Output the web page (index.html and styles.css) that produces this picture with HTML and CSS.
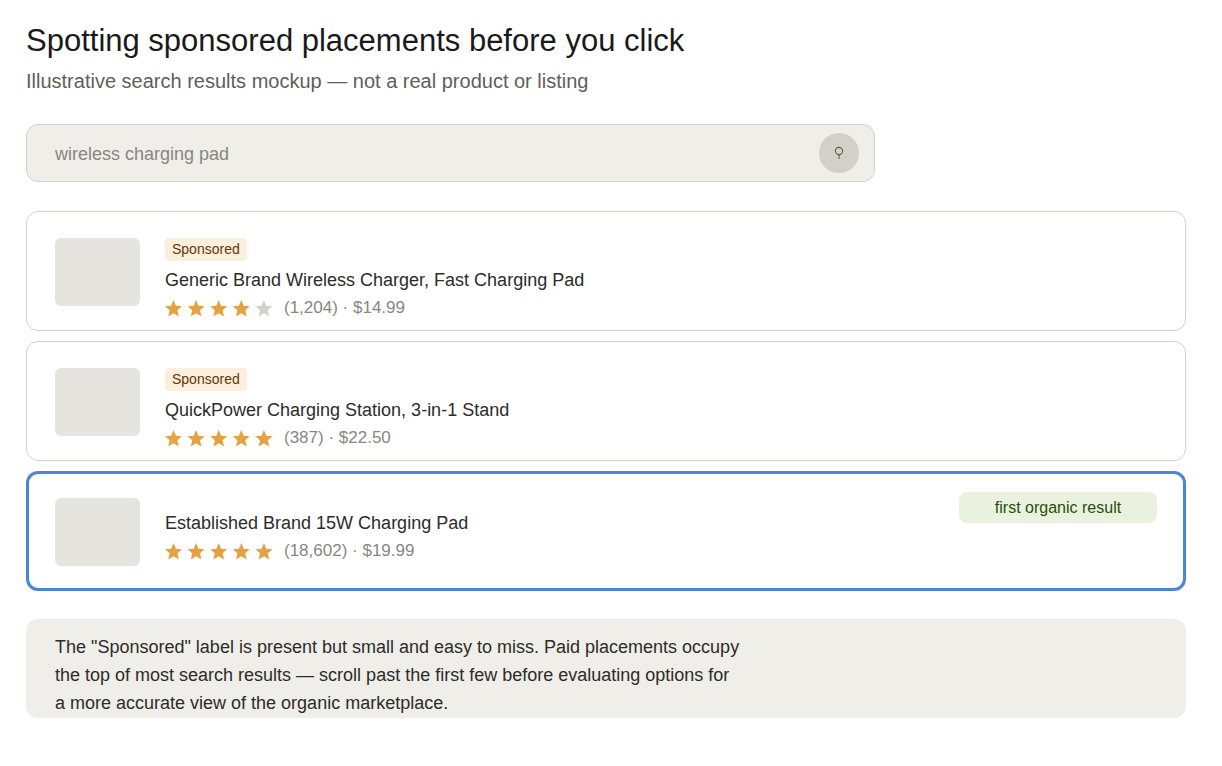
FILE: index.html
```html
<!DOCTYPE html>
<html lang="en">
<head>
    <meta charset="UTF-8">
    <meta name="viewport" content="width=device-width, initial-scale=1.0">
    <title>Spotting sponsored placements before you click</title>
    <link rel="stylesheet" href="styles.css">
</head>
<body>
    <svg class="sprite" width="0" height="0" aria-hidden="true">
        <symbol id="star" viewBox="0 0 17 17">
            <path d="M8.5 0 L10.9 5.8 L17 6.2 L12.4 10.2 L13.8 16.4 L8.5 13.2 L3.2 16.4 L4.6 10.2 L0 6.2 L6.1 5.8 Z"/>
        </symbol>
    </svg>

    <header>
        <h1>Spotting sponsored placements before you click</h1>
        <p class="subtitle">Illustrative search results mockup — not a real product or listing</p>
    </header>

    <form class="search" role="search">
        <input type="text" class="search-input" aria-label="Search" value="wireless charging pad">
        <button type="button" class="search-button" aria-label="Search">
            <svg width="10" height="14" viewBox="0 0 10 14" fill="none" stroke="#5f5e5a" stroke-width="1.1">
                <circle cx="5" cy="5" r="3.6"/>
                <path d="M5 8.6 V13"/>
            </svg>
        </button>
    </form>

    <main class="results">
        <article class="result">
            <div class="thumb"></div>
            <div class="result-body">
                <span class="sponsored">Sponsored</span>
                <h2>Generic Brand Wireless Charger, Fast Charging Pad</h2>
                <div class="rating">
                    <svg class="stars" width="108" height="17" role="img" aria-label="4 out of 5 stars">
                        <use href="#star" x="0" width="17" height="17"/>
                        <use href="#star" x="22.6" width="17" height="17"/>
                        <use href="#star" x="45.2" width="17" height="17"/>
                        <use href="#star" x="67.8" width="17" height="17"/>
                        <use href="#star" x="90.4" width="17" height="17" class="empty"/>
                    </svg>
                    <span>(1,204) · $14.99</span>
                </div>
            </div>
        </article>

        <article class="result">
            <div class="thumb"></div>
            <div class="result-body">
                <span class="sponsored">Sponsored</span>
                <h2>QuickPower Charging Station, 3-in-1 Stand</h2>
                <div class="rating">
                    <svg class="stars" width="108" height="17" role="img" aria-label="5 out of 5 stars">
                        <use href="#star" x="0" width="17" height="17"/>
                        <use href="#star" x="22.6" width="17" height="17"/>
                        <use href="#star" x="45.2" width="17" height="17"/>
                        <use href="#star" x="67.8" width="17" height="17"/>
                        <use href="#star" x="90.4" width="17" height="17"/>
                    </svg>
                    <span>(387) · $22.50</span>
                </div>
            </div>
        </article>

        <article class="result organic">
            <div class="thumb"></div>
            <div class="result-body">
                <h2>Established Brand 15W Charging Pad</h2>
                <div class="rating">
                    <svg class="stars" width="108" height="17" role="img" aria-label="5 out of 5 stars">
                        <use href="#star" x="0" width="17" height="17"/>
                        <use href="#star" x="22.6" width="17" height="17"/>
                        <use href="#star" x="45.2" width="17" height="17"/>
                        <use href="#star" x="67.8" width="17" height="17"/>
                        <use href="#star" x="90.4" width="17" height="17"/>
                    </svg>
                    <span>(18,602) · $19.99</span>
                </div>
            </div>
            <span class="organic-label">first organic result</span>
        </article>
    </main>

    <p class="note">
        The "Sponsored" label is present but small and easy to miss. Paid placements occupy<br>
        the top of most search results — scroll past the first few before evaluating options for<br>
        a more accurate view of the organic marketplace.
    </p>
</body>
</html>
```
FILE: styles.css
```css
* {
    box-sizing: border-box;
}
body {
    margin: 0;
    padding: 22px 36px 48px 26px;
    background-color: #fff;
    color: #2c2c2a;
    font-family: "Liberation Sans", Arial, sans-serif;
    font-size: 18px;
}
.sprite {
    display: block;
}
h1, h2, p {
    margin: 0;
    font-weight: normal;
}
h1 {
    font-size: 31px;
    line-height: 38px;
    color: #1a1a1a;
}
.subtitle {
    font-size: 20px;
    line-height: 28px;
    margin-top: 7px;
    color: #5f5e5a;
}
.search {
    display: flex;
    align-items: center;
    width: 849px;
    max-width: 100%;
    margin-top: 29px;
    padding: 8px 15px 8px 28px;
    background-color: #f0eee9;
    border: 1px solid #d3d1c7;
    border-radius: 12px;
}
.search-input {
    flex: 1;
    min-width: 0;
    padding: 2px 0 0;
    border: none;
    background: none;
    font: inherit;
    color: #888780;
}
.search-button {
    display: flex;
    align-items: center;
    justify-content: center;
    width: 40px;
    height: 40px;
    padding: 0;
    border: none;
    border-radius: 50%;
    background-color: #d3d1c7;
    cursor: pointer;
}
.results {
    display: flex;
    flex-direction: column;
    gap: 10px;
    margin-top: 29px;
}
.result {
    display: flex;
    align-items: flex-start;
    min-height: 120px;
    padding: 26px 28px 8px;
    border: 1px solid #d3d1c7;
    border-radius: 12px;
}
.thumb {
    width: 85px;
    height: 68px;
    border-radius: 6px;
    background-color: #e5e4df;
}
.result-body {
    flex: 1;
    margin-left: 25px;
}
.sponsored {
    display: block;
    width: fit-content;
    padding: 0 7px;
    margin-bottom: 5px;
    border-radius: 4px;
    background-color: #faeedc;
    color: #633806;
    font-size: 14px;
    line-height: 23px;
}
h2 {
    font-size: 18px;
    line-height: 28px;
}
.rating {
    display: flex;
    align-items: center;
    gap: 11px;
    font-size: 17px;
    line-height: 28px;
    color: #888780;
}
.stars {
    fill: #e5a243;
}
.stars .empty {
    fill: #d3d1c7;
}
.organic {
    padding: 24px 26px 6px;
    border: 3px solid #4a86d8;
}
.organic .result-body {
    padding-top: 11px;
}
.organic-label {
    width: 198px;
    margin-top: -6px;
    border-radius: 8px;
    background-color: #eaf2df;
    color: #27500a;
    font-size: 16px;
    line-height: 31px;
    text-align: center;
}
.note {
    margin-top: 28px;
    padding: 14px 29px 1px;
    border-radius: 12px;
    background-color: #f0eee9;
    line-height: 28px;
}
```
